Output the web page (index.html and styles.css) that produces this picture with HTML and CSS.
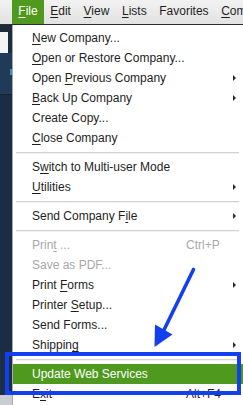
FILE: index.html
```html
<!DOCTYPE html>
<html>
<head>
<meta charset="utf-8">
<link rel="stylesheet" href="styles.css">
</head>
<body>
<div class="screen">
  <div class="menubar">
    <span class="mb-item active"><u>F</u>ile</span>
    <span class="mb-item"><u>E</u>dit</span>
    <span class="mb-item"><u>V</u>iew</span>
    <span class="mb-item"><u>L</u>ists</span>
    <span class="mb-item">Favorites</span>
    <span class="mb-item"><u>C</u>ompany</span>
  </div>
  <div class="main">
    <div class="sidebar">
      <div class="sb-a"></div>
      <div class="sb-b"><div class="sb-white"></div></div>
      <div class="sb-c"><div class="sb-mark"></div></div>
      <div class="sb-d"></div>
      <div class="sb-e"></div>
    </div>
    <div class="menu">
      <div class="row"><span class="label"><u>N</u>ew Company...</span></div>
      <div class="row"><span class="label"><u>O</u>pen or Restore Company...</span></div>
      <div class="row"><span class="label">Open <u>P</u>revious Company</span><span class="key"></span><span class="sub"><i class="tri"></i></span></div>
      <div class="row"><span class="label"><u>B</u>ack Up Company</span><span class="key"></span><span class="sub"><i class="tri"></i></span></div>
      <div class="row"><span class="label">Create Copy...</span></div>
      <div class="row"><span class="label"><u>C</u>lose Company</span></div>
      <div class="sep"></div>
      <div class="row"><span class="label">S<u>w</u>itch to Multi-user Mode</span></div>
      <div class="row"><span class="label"><u>U</u>tilities</span><span class="key"></span><span class="sub"><i class="tri"></i></span></div>
      <div class="sep"></div>
      <div class="row"><span class="label">Send Company F<u>i</u>le</span><span class="key"></span><span class="sub"><i class="tri"></i></span></div>
      <div class="sep"></div>
      <div class="row disabled"><span class="label">Prin<u>t</u> ...</span><span class="key">Ctrl+P</span><span class="sub"></span></div>
      <div class="row disabled"><span class="label">Save as PDF...</span></div>
      <div class="row"><span class="label">Print <u>F</u>orms</span><span class="key"></span><span class="sub"><i class="tri"></i></span></div>
      <div class="row"><span class="label">Printer <u>S</u>etup...</span></div>
      <div class="row"><span class="label">Send Forms...</span></div>
      <div class="row"><span class="label">Shippin<u>g</u></span><span class="key"></span><span class="sub"><i class="tri"></i></span></div>
      <div class="sep"></div>
      <div class="row hl"><span class="label">Update Web Services</span></div>
      <div class="row"><span class="label">E<u>x</u>it</span><span class="key">Alt+F4</span><span class="sub"></span></div>
    </div>
  </div>
  <div class="callout-box"></div>
  <svg class="callout-arrow" width="243" height="405" viewBox="0 0 243 405">
    <line x1="193.5" y1="269.5" x2="162" y2="334" stroke="#1240f0" stroke-width="3.6" stroke-linecap="round"/>
    <polygon points="154.5,347 155,324.5 172.5,334.5" fill="#1240f0"/>
  </svg>
</div>
</body>
</html>
```
FILE: styles.css
```css
* { box-sizing: border-box; }
html, body { margin: 0; padding: 0; }
body {
  width: 243px;
  height: 405px;
  overflow: hidden;
  font-family: "Liberation Sans", Arial, sans-serif;
  font-size: 12px;
  color: #1e1e1e;
  background: #1b2d43;
}
.screen {
  position: relative;
  width: 243px;
  height: 405px;
  overflow: hidden;
}
u { text-decoration: underline; text-decoration-thickness: 1px; text-underline-offset: 1.5px; }

.menubar {
  height: 25px;
  display: flex;
  padding-left: 12px;
  background: linear-gradient(#f2f2f2, #e2e2e2);
  border-bottom: 1px solid #2e2e2e;
  white-space: nowrap;
}
.mb-item {
  height: 24px;
  line-height: 22px;
  padding: 0 6.3px;
  color: #1e1e1e;
}
.mb-item.active {
  background: #4f9a1e;
  color: #ffffff;
}

.main {
  display: flex;
  height: 380px;
}
.sidebar {
  width: 12px;
  flex: none;
  display: flex;
  flex-direction: column;
  background: #1b2d43;
}
.sb-a { height: 7px; background: #1c2a3a; }
.sb-b { height: 21px; background: #1c2d42; display: flex; }
.sb-white { width: 8px; background: #f4f4f4; }
.sb-c { height: 42px; background: #203a58; border-bottom: 1px solid #142238; position: relative; }
.sb-mark { position: absolute; left: 10px; top: 16px; width: 2px; height: 6px; background: #3f8ec8; }
.sb-d { flex: 1; background: #1b2d43; }
.sb-e { height: 10px; background: #c9ccd0; }

.menu {
  flex: 1;
  background: #ffffff;
  border-left: 1px solid #a9a9a9;
  padding-top: 3px;
  min-width: 0;
}
.row {
  display: flex;
  height: 20px;
  line-height: 20px;
  padding-left: 19px;
  white-space: nowrap;
}
.label { flex: 1; }
.key { width: 46px; flex: none; }
.sub {
  width: 11px;
  flex: none;
  display: flex;
  align-items: center;
}
.tri {
  display: block;
  width: 0;
  height: 0;
  border-left: 3.5px solid #2a2a2a;
  border-top: 3px solid transparent;
  border-bottom: 3px solid transparent;
  margin-left: 1px;
}
.disabled { color: #a8a8a8; }
.hl { background: #4f9a1e; color: #ffffff; }
.sep {
  height: 2px;
  margin: 4px 4px 3px 3px;
  background: #d2d2d2;
  border-bottom: 1px solid #f2f2f2;
}

.callout-box {
  position: absolute;
  left: 5px;
  top: 352px;
  width: 236px;
  height: 43px;
  border: 4px solid #1240f0;
}
.callout-arrow {
  position: absolute;
  left: 0;
  top: 0;
}
```
